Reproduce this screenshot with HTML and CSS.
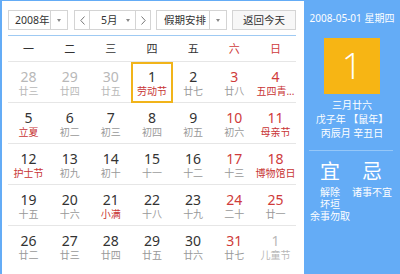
FILE: index.html
```html
<!DOCTYPE html>
<html lang="zh-CN">
<head>
    <meta charset="UTF-8">
    <meta name="viewport" content="width=device-width, initial-scale=1.0">
    <title>万年历</title>
    <link rel="stylesheet" href="styles.css">
</head>
<body>
    <div class="cal">
        <div class="main">
            <div class="bar">
                <div class="sel year">
                    <span class="val">2008年</span>
                    <span class="drop"><i class="tri"></i></span>
                </div>
                <div class="sel month">
                    <span class="arr"><svg width="5" height="9" viewBox="0 0 5 9"><polyline points="4.5,0.5 0.8,4.5 4.5,8.5" fill="none" stroke="#777" stroke-width="1"/></svg></span>
                    <span class="val">5月<i class="tri"></i></span>
                    <span class="arr"><svg width="5" height="9" viewBox="0 0 5 9"><polyline points="0.5,0.5 4.2,4.5 0.5,8.5" fill="none" stroke="#777" stroke-width="1"/></svg></span>
                </div>
                <div class="sel holiday">
                    <span class="val">假期安排</span>
                    <span class="drop"><i class="tri"></i></span>
                </div>
                <div class="btn">返回今天</div>
            </div>

            <div class="week">
                <span>一</span><span>二</span><span>三</span><span>四</span><span>五</span>
                <span class="red">六</span><span class="red">日</span>
            </div>

            <div class="grid">
                <div class="cell other"><b>28</b><em>廿三</em></div>
                <div class="cell other"><b>29</b><em>廿四</em></div>
                <div class="cell other"><b>30</b><em>廿五</em></div>
                <div class="cell today"><b>1</b><em class="fest">劳动节</em></div>
                <div class="cell"><b>2</b><em>廿七</em></div>
                <div class="cell wkd"><b>3</b><em>廿八</em></div>
                <div class="cell wkd"><b>4</b><em class="fest">五四青...</em></div>

                <div class="cell"><b>5</b><em class="fest">立夏</em></div>
                <div class="cell"><b>6</b><em>初二</em></div>
                <div class="cell"><b>7</b><em>初三</em></div>
                <div class="cell"><b>8</b><em>初四</em></div>
                <div class="cell"><b>9</b><em>初五</em></div>
                <div class="cell wkd"><b>10</b><em>初六</em></div>
                <div class="cell wkd"><b>11</b><em class="fest">母亲节</em></div>

                <div class="cell"><b>12</b><em class="fest">护士节</em></div>
                <div class="cell"><b>13</b><em>初九</em></div>
                <div class="cell"><b>14</b><em>初十</em></div>
                <div class="cell"><b>15</b><em>十一</em></div>
                <div class="cell"><b>16</b><em>十二</em></div>
                <div class="cell wkd"><b>17</b><em>十三</em></div>
                <div class="cell wkd"><b>18</b><em class="fest">博物馆日</em></div>

                <div class="cell"><b>19</b><em>十五</em></div>
                <div class="cell"><b>20</b><em>十六</em></div>
                <div class="cell"><b>21</b><em class="fest">小满</em></div>
                <div class="cell"><b>22</b><em>十八</em></div>
                <div class="cell"><b>23</b><em>十九</em></div>
                <div class="cell wkd"><b>24</b><em>二十</em></div>
                <div class="cell wkd"><b>25</b><em>廿一</em></div>

                <div class="cell"><b>26</b><em>廿二</em></div>
                <div class="cell"><b>27</b><em>廿三</em></div>
                <div class="cell"><b>28</b><em>廿四</em></div>
                <div class="cell"><b>29</b><em>廿五</em></div>
                <div class="cell"><b>30</b><em>廿六</em></div>
                <div class="cell wkd"><b>31</b><em>廿七</em></div>
                <div class="cell other"><b>1</b><em>儿童节</em></div>
            </div>
        </div>

        <div class="side">
            <div class="date">2008-05-01 星期四</div>
            <div class="big">1</div>
            <div class="lunar">
                <div>三月廿六</div>
                <div>戊子年 【鼠年】</div>
                <div>丙辰月 辛丑日</div>
            </div>
            <div class="yj">
                <div class="col">
                    <div class="hd">宜</div>
                    <div class="items">
                        <div>解除</div>
                        <div>坏垣</div>
                        <div>余事勿取</div>
                    </div>
                </div>
                <div class="col">
                    <div class="hd">忌</div>
                    <div class="items">
                        <div>诸事不宜</div>
                    </div>
                </div>
            </div>
        </div>
    </div>
</body>
</html>
```

FILE: styles.css
```css
html, body {
    margin: 0;
    width: 400px;
    height: 274px;
    overflow: hidden;
    background: white;
    font-family: "Noto Sans", "Noto Sans CJK SC", sans-serif;
    color: #333;
}
.cal {
    display: flex;
    height: 274px;
    box-sizing: border-box;
    border-top: 1px solid #64acf6;
    border-left: 2px solid #64acf6;
}
.main {
    width: 302px;
    box-sizing: border-box;
    padding: 9px 8px 0 6px;
}

/* top controls */
.bar {
    display: flex;
    gap: 5px;
    height: 20px;
}
.sel, .btn {
    display: flex;
    height: 20px;
    box-sizing: border-box;
    border: 1px solid #d4d4d4;
    background: white;
    font-size: 10.5px;
    line-height: 18px;
    white-space: nowrap;
}
.year {
    margin-right: 1px;
}
.year .val {
    width: 41px;
    padding-left: 6px;
    box-sizing: border-box;
}
.drop {
    width: 16px;
    border-left: 1px solid #d4d4d4;
    display: flex;
    align-items: center;
    justify-content: center;
}
.tri {
    display: inline-block;
    width: 0;
    height: 0;
    border-left: 2.5px solid transparent;
    border-right: 2.5px solid transparent;
    border-top: 3px solid #888;
}
.month .arr {
    width: 14px;
    display: flex;
    align-items: center;
    justify-content: center;
}
.month .val {
    width: 47px;
    box-sizing: border-box;
    padding: 0 5px 0 11px;
    border-left: 1px solid #d4d4d4;
    border-right: 1px solid #d4d4d4;
    display: flex;
    align-items: center;
    justify-content: space-between;
}
.holiday .val {
    width: 52px;
    padding-left: 7px;
    box-sizing: border-box;
}
.btn {
    width: 64px;
    justify-content: center;
    background: #f7f7f7;
}

/* week header */
.week {
    margin-top: 5px;
    border-top: 1px solid #9fcaf3;
    display: grid;
    grid-template-columns: repeat(7, 1fr);
    height: 25px;
    line-height: 26px;
    font-size: 11px;
    text-align: center;
}
.red {
    color: #cf3b3b;
}

/* day grid */
.grid {
    display: grid;
    grid-template-columns: repeat(7, 1fr);
}
.cell {
    position: relative;
    height: 41px;
    box-sizing: border-box;
    border-top: 1px solid #e6e6e6;
    padding-top: 7px;
    text-align: center;
}
.cell b {
    display: block;
    font-weight: normal;
    font-size: 14px;
    line-height: 16px;
}
.cell em {
    display: block;
    font-style: normal;
    font-size: 10px;
    line-height: 12px;
    color: #999;
    white-space: nowrap;
}
.cell em.fest {
    color: #c83535;
}
.cell.wkd b {
    color: #cf3b3b;
}
.cell.other b, .cell.other em {
    color: #b8b8b8;
}
.cell.today::after {
    content: "";
    position: absolute;
    top: 0;
    left: 0;
    right: 0;
    bottom: -1px;
    border: 2px solid #f1b41a;
    z-index: 1;
}

/* right panel */
.side {
    flex: 1;
    background: #64acf6;
    color: white;
    text-align: center;
}
.date {
    padding-top: 10px;
    font-size: 10px;
    line-height: 14px;
}
.big {
    width: 56px;
    height: 56px;
    margin: 13px auto 0;
    background: #f7b514;
    font-family: "Open Sans", "Noto Sans", sans-serif;
    font-weight: 300;
    font-size: 36px;
    line-height: 56px;
}
.lunar {
    margin-top: 4px;
    font-size: 10px;
    line-height: 14px;
}
.yj {
    margin: 10px 7px 0 5px;
    border-top: 1px solid #95c7f8;
    display: grid;
    grid-template-columns: 42px 42px;
}
.yj .hd {
    margin-top: 10px;
    font-size: 20px;
    line-height: 22px;
}
.yj .items {
    margin-top: 3px;
    font-size: 10px;
    line-height: 12px;
    white-space: nowrap;
}
```
